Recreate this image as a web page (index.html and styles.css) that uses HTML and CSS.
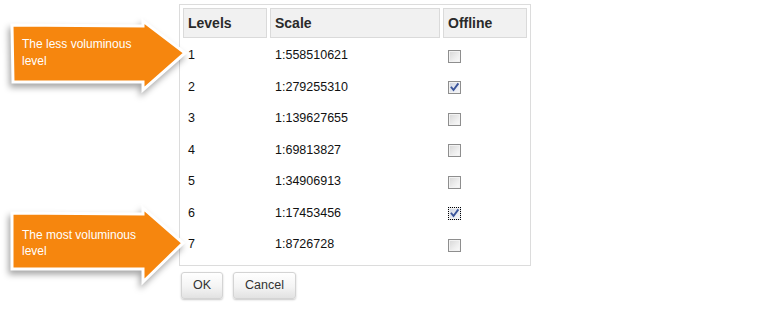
FILE: index.html
```html
<!DOCTYPE html>
<html lang="en">
<head>
<meta charset="utf-8">
<title>Levels</title>
<link rel="stylesheet" href="styles.css">
</head>
<body>
<div class="page">
  <div class="callout callout-top">
    <svg class="callout-shape" width="200" height="80" viewBox="0 0 200 80">
      <polygon points="12,5 143,6 143,1 185,33 143,70 143,62 13,62" />
    </svg>
    <div class="callout-text">The less voluminous<br>level</div>
  </div>
  <div class="callout callout-bottom">
    <svg class="callout-shape" width="200" height="90" viewBox="0 0 200 90">
      <polygon points="12,9 143,10 143,4 183,39 143,78 143,65 12,65" />
    </svg>
    <div class="callout-text">The most voluminous<br>level</div>
  </div>

  <div class="gutter"></div>
  <div class="dialog">
    <div class="grid-box">
      <table class="levels">
        <thead>
          <tr>
            <th class="c-level">Levels</th>
            <th class="c-scale">Scale</th>
            <th class="c-off">Offline</th>
          </tr>
        </thead>
        <tbody>
          <tr><td>1</td><td>1:558510621</td><td><span class="cb"></span></td></tr>
          <tr><td>2</td><td>1:279255310</td><td><span class="cb checked"><svg viewBox="0 0 11 11" width="11" height="11"><path d="M2.5 5.5 L4.5 8 L8.8 2.2" /></svg></span></td></tr>
          <tr><td>3</td><td>1:139627655</td><td><span class="cb"></span></td></tr>
          <tr><td>4</td><td>1:69813827</td><td><span class="cb"></span></td></tr>
          <tr><td>5</td><td>1:34906913</td><td><span class="cb"></span></td></tr>
          <tr><td>6</td><td>1:17453456</td><td><span class="cb checked focused"><svg viewBox="0 0 11 11" width="11" height="11"><path d="M2.5 5.5 L4.5 8 L8.8 2.2" /></svg></span></td></tr>
          <tr><td>7</td><td>1:8726728</td><td><span class="cb"></span></td></tr>
        </tbody>
      </table>
    </div>
    <div class="buttons">
      <button class="btn" type="button">OK</button>
      <button class="btn" type="button">Cancel</button>
    </div>
  </div>
</div>
</body>
</html>
```

FILE: styles.css
```css
* { box-sizing: border-box; }

html, body {
  margin: 0;
  padding: 0;
  background: #ffffff;
}

body {
  font-family: "Liberation Sans", Arial, sans-serif;
  color: #111111;
}

.page {
  position: relative;
  display: flex;
  padding-top: 4px;
  width: 761px;
  height: 317px;
}

.gutter {
  flex: 0 0 179px;
}

.dialog {
  display: flex;
  flex-direction: column;
  gap: 6px;
}

.grid-box {
  border: 1px solid #dcdcdc;
  width: 352px;
  padding-bottom: 3px;
}

.levels {
  border-collapse: separate;
  border-spacing: 3px;
  table-layout: fixed;
  width: 350px;
}

.levels th,
.levels td {
  text-align: left;
  padding: 0 4px;
  border: 1px solid transparent;
}

.levels th {
  height: 30px;
  background: #f1f1f1;
  border-color: #dadada;
  font-size: 14px;
  font-weight: bold;
  color: #2a2a2a;
}

.levels td {
  height: 28.5px;
  font-size: 12.5px;
  color: #111111;
  vertical-align: middle;
}

.c-level { width: 84px; }
.c-scale { width: 170px; }
.c-off { width: 84px; }

.cb {
  display: inline-flex;
  align-items: center;
  justify-content: center;
  width: 13px;
  height: 13px;
  border: 1px solid #8e8e8e;
  background: linear-gradient(135deg, #d6d6d6 0%, #eeeeee 60%, #fbfbfb 100%);
  box-shadow: inset 0 0 0 1px #f2f2f2;
  vertical-align: middle;
  margin-top: 2px;
}

.cb svg {
  display: block;
}

.cb svg path {
  fill: none;
  stroke: #3a549a;
  stroke-width: 1.9;
  stroke-linecap: square;
}

.cb.checked {
  background: linear-gradient(135deg, #cdd3e0 0%, #e7eaf2 60%, #f7f8fb 100%);
}

.cb.focused {
  border: 1px dotted #000000;
}

.buttons {
  display: flex;
  gap: 10px;
  padding-left: 2px;
}

.btn {
  font-family: "Liberation Sans", Arial, sans-serif;
  font-size: 12.5px;
  color: #333333;
  height: 27px;
  padding: 0 11px;
  border: 1px solid #d4d4d4;
  border-radius: 3px;
  background: linear-gradient(#ffffff 0%, #f4f4f4 55%, #e2e2e2 100%);
  box-shadow: 0 1px 2px rgba(0, 0, 0, 0.22);
}

/* callouts (annotations overlaying the left area) */
.callout {
  position: absolute;
  left: 0;
  width: 200px;
}

.callout-top { top: 20px; height: 80px; }
.callout-bottom { top: 204px; height: 90px; }

.callout-shape {
  position: absolute;
  left: 0;
  top: 0;
  overflow: visible;
  filter: drop-shadow(-2px 4px 3px rgba(0, 0, 0, 0.35));
}

.callout-shape polygon {
  fill: #f6860e;
  stroke: #ffffff;
  stroke-width: 3;
  stroke-linejoin: miter;
}

.callout-text {
  position: absolute;
  left: 22px;
  width: 130px;
  color: #ffffff;
  font-family: "Liberation Sans", Arial, sans-serif;
  font-size: 12px;
  line-height: 17px;
}

.callout-top .callout-text { top: 16px; }
.callout-bottom .callout-text { top: 23px; line-height: 16px; }
```
